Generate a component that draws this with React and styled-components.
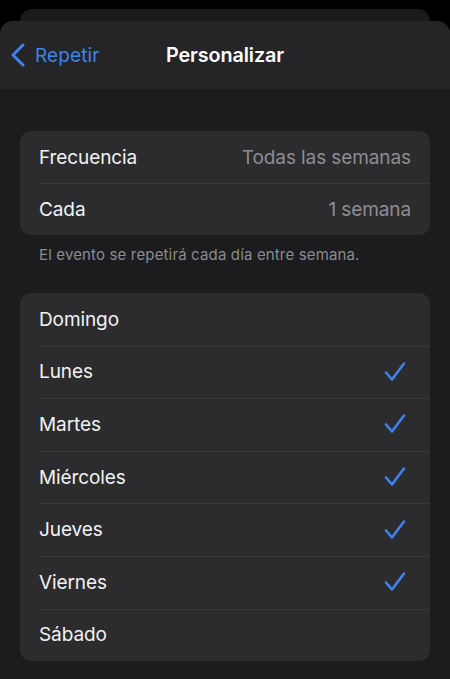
import React from 'react';
import styled, { createGlobalStyle } from 'styled-components';

const GlobalStyle = createGlobalStyle`
  html, body {
    margin: 0;
    padding: 0;
    background: #000;
  }
  body {
    font-family: Inter, "Noto Sans", "Liberation Sans", sans-serif;
    -webkit-font-smoothing: antialiased;
  }
`;

const Screen = styled.div`
  width: 450px;
  height: 679px;
  background: #000;
  overflow: hidden;
  display: flex;
  flex-direction: column;
  padding-top: 9px;
  box-sizing: border-box;
`;

const BackSheet = styled.div`
  height: 24px;
  margin: 0 20px -12px;
  border-radius: 12px 12px 0 0;
  background: #1a1a1c;
`;

const Sheet = styled.div`
  flex: 1;
  position: relative;
  border-radius: 13px 13px 0 0;
  background: #1c1c1e;
  overflow: hidden;
  display: flex;
  flex-direction: column;
`;

const NavBar = styled.div`
  height: 68px;
  background: #252527;
  display: grid;
  grid-template-columns: 1fr auto 1fr;
  align-items: center;
  padding: 0 10px;
  box-sizing: border-box;
`;

const BackButton = styled.div`
  display: flex;
  align-items: center;
  gap: 9px;
  color: #3d83ee;
  font-size: 19px;
  letter-spacing: 0.1px;
`;

const Title = styled.div`
  color: #fff;
  font-size: 19.8px;
  font-weight: 600;
  letter-spacing: -0.1px;
`;

const Content = styled.div`
  padding: 42px 20px 0;
  display: flex;
  flex-direction: column;
`;

const Group = styled.div`
  background: #2c2c2e;
  border-radius: 11px;
  overflow: hidden;
`;

const Row = styled.div`
  height: ${p => p.$h}px;
  display: flex;
  align-items: center;
  justify-content: space-between;
  padding: 0 24px 0 19px;
  position: relative;
  & + &::before {
    content: '';
    position: absolute;
    top: 0;
    left: 19px;
    right: 0;
    height: 1px;
    background: #3a3a3c;
  }
`;

const Label = styled.span`
  color: #f2f2f4;
  font-size: 19px;
  letter-spacing: -0.1px;
`;

const Value = styled.span`
  color: #8d8d92;
  font-size: 19px;
  letter-spacing: -0.1px;
  margin-right: -5px;
`;

const Footer = styled.div`
  color: #8b8b90;
  font-size: 15px;
  letter-spacing: 0.15px;
  padding: 10px 19px 0;
  height: 58px;
  box-sizing: border-box;
`;

const Chevron = () => (
  <svg width="16" height="24" viewBox="0 0 16 24" fill="none">
    <path d="M13 2 L3 12 L13 22" stroke="#3d83ee" strokeWidth="3" strokeLinecap="round" strokeLinejoin="round" />
  </svg>
);

const Check = () => (
  <svg width="22" height="22" viewBox="0 0 22 22" fill="none">
    <path d="M2 11.5 L8 18.5 L20 2.5" stroke="#3d83ee" strokeWidth="2.6" strokeLinecap="round" strokeLinejoin="round" />
  </svg>
);

const days = [
  { name: 'Domingo', on: false },
  { name: 'Lunes', on: true },
  { name: 'Martes', on: true },
  { name: 'Miércoles', on: true },
  { name: 'Jueves', on: true },
  { name: 'Viernes', on: true },
  { name: 'Sábado', on: false },
];

export default function App() {
  return (
    <>
      <GlobalStyle />
      <Screen>
        <BackSheet />
        <Sheet>
          <NavBar>
            <BackButton>
              <Chevron />
              Repetir
            </BackButton>
            <Title>Personalizar</Title>
            <div />
          </NavBar>
          <Content>
            <Group>
              <Row $h={52}>
                <Label>Frecuencia</Label>
                <Value>Todas las semanas</Value>
              </Row>
              <Row $h={52}>
                <Label>Cada</Label>
                <Value>1 semana</Value>
              </Row>
            </Group>
            <Footer>El evento se repetirá cada día entre semana.</Footer>
            <Group>
              {days.map(d => (
                <Row key={d.name} $h={52.6}>
                  <Label>{d.name}</Label>
                  {d.on && <Check />}
                </Row>
              ))}
            </Group>
          </Content>
        </Sheet>
      </Screen>
    </>
  );
}
